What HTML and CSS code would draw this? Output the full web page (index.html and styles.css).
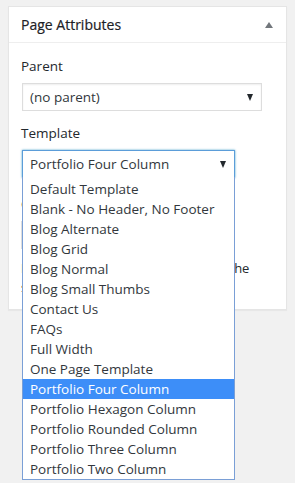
FILE: index.html
```html
<!DOCTYPE html>
<html lang="en">
<head>
  <meta charset="UTF-8">
  <meta name="viewport" content="width=device-width, initial-scale=1.0">
  <title>Page Attributes</title>
  <link rel="stylesheet" href="styles.css">
</head>
<body>
  <div class="postbox">
    <h2 class="hndle">
      <span>Page Attributes</span>
      <span class="toggle"></span>
    </h2>
    <div class="inside">
      <p class="label">Parent</p>
      <div class="select parent-select">
        <span>(no parent)</span>
        <span class="arrow"></span>
      </div>

      <p class="label">Template</p>
      <div class="dropdown">
        <div class="select template-select focus">
          <span>Portfolio Four Column</span>
          <span class="arrow"></span>
        </div>
        <ul class="options">
          <li>Default Template</li>
          <li>Blank - No Header, No Footer</li>
          <li>Blog Alternate</li>
          <li>Blog Grid</li>
          <li>Blog Normal</li>
          <li>Blog Small Thumbs</li>
          <li>Contact Us</li>
          <li>FAQs</li>
          <li>Full Width</li>
          <li>One Page Template</li>
          <li class="selected">Portfolio Four Column</li>
          <li>Portfolio Hexagon Column</li>
          <li>Portfolio Rounded Column</li>
          <li>Portfolio Three Column</li>
          <li>Portfolio Two Column</li>
        </ul>
      </div>

      <p class="label order-label">Order</p>
      <input class="order" type="text" value="0">
      <p class="help">Need help? Use the Help tab above the screen title.</p>
    </div>
  </div>
</body>
</html>
```

FILE: styles.css
```css
html, body {
  min-height: 100%;
}

body {
  font-family: "Open Sans", "Noto Sans", sans-serif;
  background-color: #f1f1f1;
  color: #23282d;
  margin: 0;
  padding: 0;
  min-height: 483px;
}

.postbox {
  margin: 6px 8px 0 8px;
  background-color: #fff;
  border: 1px solid #e5e5e5;
  box-shadow: 0 1px 1px rgba(0, 0, 0, 0.04);
  width: 277px;
}

.hndle {
  display: flex;
  align-items: center;
  justify-content: space-between;
  height: 35px;
  margin: 0;
  padding: 0 12px;
  font-size: 14px;
  font-weight: 400;
  color: #1d2125;
  -webkit-text-stroke: 0.2px #1d2125;
  border-bottom: 1px solid #eee;
}

.toggle {
  width: 0;
  height: 0;
  margin-right: 1px;
  border-left: 4px solid transparent;
  border-right: 4px solid transparent;
  border-bottom: 6px solid #72777c;
}

.inside {
  padding: 13px 12px 12px 12px;
  font-size: 13px;
}

.label {
  margin: 0 0 7px 0;
  height: 20px;
  line-height: 20px;
  font-size: 13.5px;
  font-weight: 400;
  color: #23282d;
}

.select {
  box-sizing: border-box;
  display: flex;
  align-items: center;
  justify-content: space-between;
  height: 28px;
  padding: 0 8px 0 7px;
  border: 1px solid #ddd;
  background-color: #fff;
  color: #32373c;
  font-size: 13.5px;
  box-shadow: inset 0 1px 2px rgba(0, 0, 0, 0.07);
}

.parent-select {
  width: 240px;
  margin-left: 1px;
  margin-bottom: 12px;
}

.arrow {
  width: 0;
  height: 0;
  border-left: 3.5px solid transparent;
  border-right: 3.5px solid transparent;
  border-top: 7px solid #23282d;
}

.dropdown {
  position: relative;
  width: 213px;
  margin-left: 1px;
}

.template-select.focus {
  border-color: #5b9dd9;
  box-shadow: 0 0 2px rgba(30, 140, 190, 0.8);
}

.options {
  position: absolute;
  top: 27px;
  left: 0;
  right: 0;
  z-index: 2;
  margin: 0;
  padding: 2px 0 0 0;
  list-style: none;
  background-color: #fff;
  border: 1px solid #7a9fd6;
  border-top: none;
}

.options li {
  height: 20px;
  line-height: 20px;
  padding: 0 7px;
  font-size: 13.5px;
  color: #32373c;
  white-space: nowrap;
}

.options li.selected {
  background-color: #3d8ef8;
  color: #fff;
}

.order-label {
  margin-top: 16px;
}

.order {
  box-sizing: border-box;
  width: 60px;
  height: 28px;
  border: 1px solid #ddd;
}

.help {
  margin: 10px 0 0 0;
  line-height: 19px;
  letter-spacing: -0.2px;
  color: #23282d;
}
```
